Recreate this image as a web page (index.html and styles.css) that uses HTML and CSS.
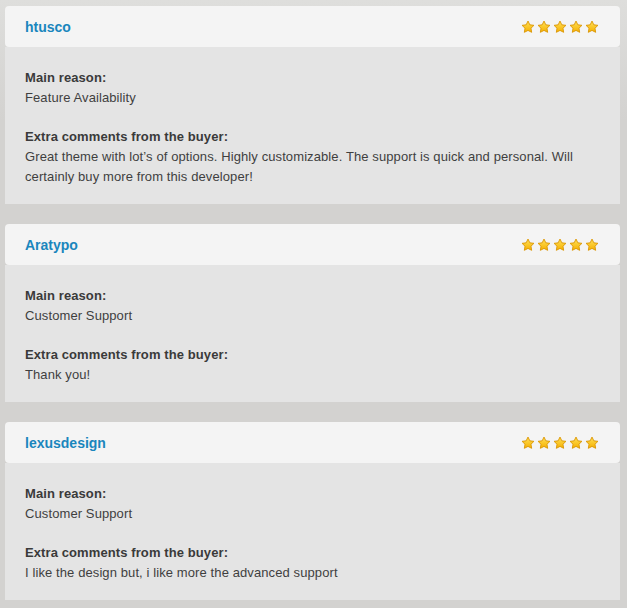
FILE: index.html
```html
<!DOCTYPE html>
<html>
<head>
<title>Buyer Reviews</title>
<link rel="stylesheet" href="styles.css">
</head>
<body>
  <svg width="0" height="0" class="defs">
    <defs>
      <linearGradient id="starFill" x1="0" y1="0" x2="0" y2="1">
        <stop offset="0" stop-color="#ffe15a"/>
        <stop offset="1" stop-color="#f5b000"/>
      </linearGradient>
      <symbol id="star" viewBox="0 0 16 16">
        <path d="M8 1.2l2.1 4.3 4.7.6-3.4 3.3.8 4.7L8 11.9l-4.2 2.2.8-4.7L1.2 6.1l4.7-.6z" fill="url(#starFill)" stroke="#d99400" stroke-width="1" stroke-linejoin="round"/>
      </symbol>
    </defs>
  </svg>

  <div class="review">
    <div class="review-head">
      <a class="buyer" href="#">htusco</a>
      <div class="stars">
        <svg><use href="#star"/></svg><svg><use href="#star"/></svg><svg><use href="#star"/></svg><svg><use href="#star"/></svg><svg><use href="#star"/></svg>
      </div>
    </div>
    <div class="review-body">
      <p><strong>Main reason:</strong><br>Feature Availability</p>
      <p><strong>Extra comments from the buyer:</strong><br>Great theme with lot’s of options. Highly customizable. The support is quick and personal. Will certainly buy more from this developer!</p>
    </div>
  </div>

  <div class="review">
    <div class="review-head">
      <a class="buyer" href="#">Aratypo</a>
      <div class="stars">
        <svg><use href="#star"/></svg><svg><use href="#star"/></svg><svg><use href="#star"/></svg><svg><use href="#star"/></svg><svg><use href="#star"/></svg>
      </div>
    </div>
    <div class="review-body">
      <p><strong>Main reason:</strong><br>Customer Support</p>
      <p><strong>Extra comments from the buyer:</strong><br>Thank you!</p>
    </div>
  </div>

  <div class="review">
    <div class="review-head">
      <a class="buyer" href="#">lexusdesign</a>
      <div class="stars">
        <svg><use href="#star"/></svg><svg><use href="#star"/></svg><svg><use href="#star"/></svg><svg><use href="#star"/></svg><svg><use href="#star"/></svg>
      </div>
    </div>
    <div class="review-body">
      <p><strong>Main reason:</strong><br>Customer Support</p>
      <p><strong>Extra comments from the buyer:</strong><br>I like the design but, i like more the advanced support</p>
    </div>
  </div>
</body>
</html>
```

FILE: styles.css
```css
html {
  background: linear-gradient(#dededc, #d3d2d0 120px);
  min-height: 100%;
}
body {
  margin: 0;
  padding: 6px 7px 0 5px;
  font-family: "Liberation Sans", Arial, sans-serif;
  font-size: 13px;
  line-height: 20px;
  color: #3f3f3f;
}
.defs {
  position: absolute;
}
.review {
  margin-bottom: 20px;
}
.review-head {
  display: flex;
  justify-content: space-between;
  align-items: center;
  height: 41px;
  padding: 0 21px 0 20px;
  background-color: #f4f4f4;
  border-radius: 4px;
}
.buyer {
  font-weight: bold;
  font-size: 14px;
  color: #1a86bd;
  text-decoration: none;
}
.stars {
  display: flex;
  gap: 2px;
}
.stars svg {
  width: 14px;
  height: 14px;
}
.review-body {
  background-color: #e4e4e4;
  padding: 21px 20px 17px 20px;
  letter-spacing: 0.1px;
}
.review-body p {
  margin: 0 0 19px 0;
}
.review-body p:last-child {
  margin-bottom: 0;
}
.review-body strong {
  color: #3a3a3a;
}
```
